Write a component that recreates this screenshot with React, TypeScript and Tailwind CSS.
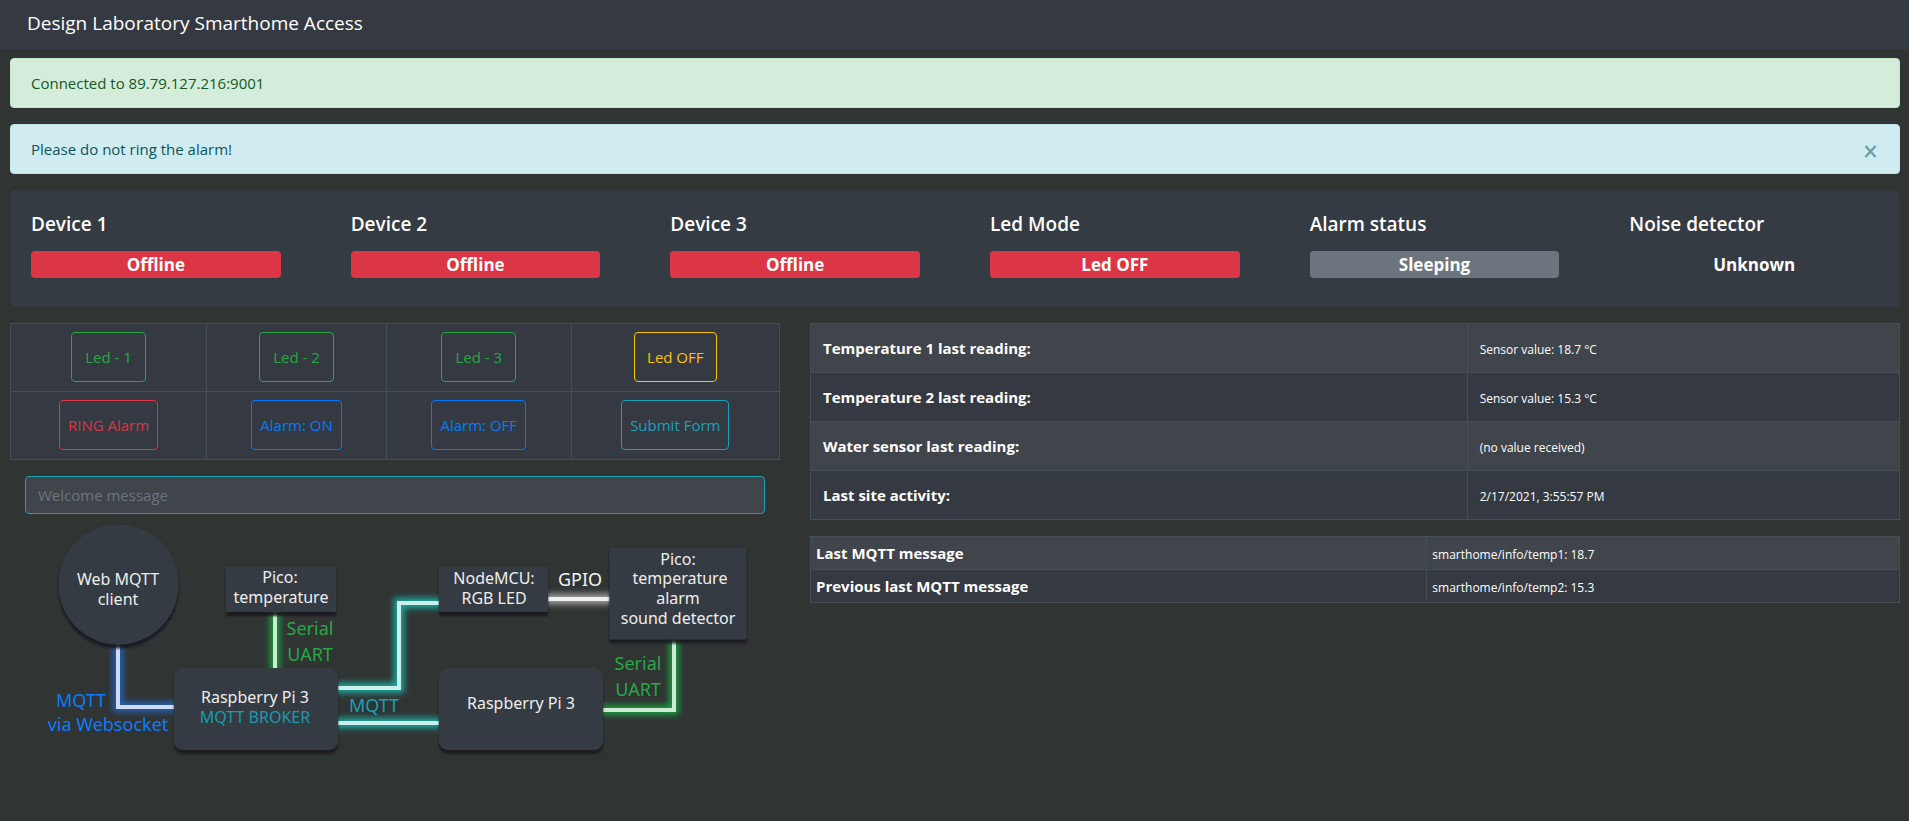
import { useState } from "react";

const devices = [
  { name: "Device 1", status: "Offline", tone: "bg-[#dc3545]" },
  { name: "Device 2", status: "Offline", tone: "bg-[#dc3545]" },
  { name: "Device 3", status: "Offline", tone: "bg-[#dc3545]" },
  { name: "Led Mode", status: "Led OFF", tone: "bg-[#dc3545]" },
  { name: "Alarm status", status: "Sleeping", tone: "bg-[#6c757d]" },
  { name: "Noise detector", status: "Unknown", tone: "" },
];

const green = "border-[#28a745] text-[#28a745] px-[13px]";
const blue = "border-[#007bff] text-[#007bff] px-2";
const controls = [
  [
    { label: "Led - 1", style: green },
    { label: "Led - 2", style: green },
    { label: "Led - 3", style: green },
    { label: "Led OFF", style: "border-[#ffc107] text-[#ffc107] px-3" },
  ],
  [
    { label: "RING Alarm", style: "border-[#dc3545] text-[#dc3545] px-2" },
    { label: "Alarm: ON", style: blue },
    { label: "Alarm: OFF", style: blue },
    { label: "Submit Form", style: "border-[#17a2b8] text-[#17a2b8] px-2" },
  ],
];

const readings = [
  ["Temperature 1 last reading:", "Sensor value: 18.7 °C"],
  ["Temperature 2 last reading:", "Sensor value: 15.3 °C"],
  ["Water sensor last reading:", "(no value received)"],
  ["Last site activity:", "2/17/2021, 3:55:57 PM"],
];

const messages = [
  ["Last MQTT message", "smarthome/info/temp1: 18.7"],
  ["Previous last MQTT message", "smarthome/info/temp2: 15.3"],
];

function Wire({ d, glow, core }: { d: string; glow: string; core: string }) {
  return (
    <g fill="none">
      <path d={d} stroke={glow} strokeWidth="10" filter="url(#glow)" />
      <path d={d} stroke={core} strokeWidth="4" />
    </g>
  );
}

function Topology() {
  return (
    <svg
      viewBox="10 514 770 250"
      className="block w-full"
      role="img"
      aria-label="Network topology"
      textAnchor="middle"
    >
      <defs>
        <filter id="glow" filterUnits="userSpaceOnUse" x="10" y="515" width="770" height="250">
          <feGaussianBlur stdDeviation="3" />
        </filter>
        <filter id="shade" filterUnits="userSpaceOnUse" x="10" y="515" width="770" height="250">
          <feDropShadow dx="0" dy="4" stdDeviation="1" floodColor="#17191b" floodOpacity="0.9" />
        </filter>
      </defs>
      <Wire d="M118 640V707H180" glow="#2460b8" core="#cfdcf4" />
      <Wire d="M275 606V672" glow="#1f9a3c" core="#cdecd2" />
      <Wire d="M334 688H399V603H442" glow="#1daaa0" core="#c9f0ec" />
      <Wire d="M334 723H442" glow="#1daaa0" core="#c9f0ec" />
      <Wire d="M544 599H614" glow="#a4a5a5" core="#f0f0f0" />
      <Wire d="M674 634V710H598" glow="#1f9a3c" core="#cdecd2" />
      <g fill="#343b43" filter="url(#shade)">
        <circle cx="118.5" cy="584.5" r="60" />
        <rect x="226" y="567" width="110" height="45" />
        <rect x="439" y="567" width="109" height="45" />
        <rect x="609.5" y="548" width="137" height="91.5" />
        <rect x="174" y="668" width="164" height="82" rx="9" />
        <rect x="439" y="668" width="164" height="82" rx="9" />
      </g>
      <g className="font-['Noto_Sans',sans-serif] text-[16px]" fill="#eeeeee">
        <text x="118" y="585">Web MQTT</text>
        <text x="118" y="605">client</text>
        <text x="280" y="583">Pico:</text>
        <text x="281" y="603">temperature</text>
        <text x="494" y="584">NodeMCU:</text>
        <text x="494" y="604">RGB LED</text>
        <text x="678" y="565">Pico:</text>
        <text x="680" y="584">temperature</text>
        <text x="678" y="604">alarm</text>
        <text x="678" y="624">sound detector</text>
        <text x="255" y="703">Raspberry Pi 3</text>
        <text x="255" y="723" fill="#1b9aae">MQTT BROKER</text>
        <text x="521" y="709">Raspberry Pi 3</text>
      </g>
      <g className="font-['Noto_Sans',sans-serif] text-[18px]">
        <text x="81" y="707" fill="#0a7cff">MQTT</text>
        <text x="108" y="731" fill="#0a7cff">via Websocket</text>
        <text x="310" y="635" fill="#28a745">Serial</text>
        <text x="310" y="661" fill="#28a745">UART</text>
        <text x="374" y="712" fill="#1b9fb4">MQTT</text>
        <text x="580" y="586" fill="#f4f4f4">GPIO</text>
        <text x="638" y="670" fill="#28a745">Serial</text>
        <text x="638" y="696" fill="#28a745">UART</text>
      </g>
    </svg>
  );
}

export default function App() {
  const [noticeOpen, setNoticeOpen] = useState(true);
  return (
    <div className="min-h-screen bg-[#303433] font-['Open_Sans','Noto_Sans',sans-serif] text-[15px] leading-6 text-white">
      <header className="bg-[#353941] px-[27px] pt-2 pb-3">
        <h1 className="text-[19px] leading-[30px]">Design Laboratory Smarthome Access</h1>
      </header>
      <main className="pt-2 pr-[9px] pl-[10px]">
        <div className="mb-4 rounded border border-[#c3e6cb] bg-[#d4edda] px-5 py-3 text-[#155724]">
          Connected to 89.79.127.216:9001
        </div>
        {noticeOpen && (
          <div className="mb-4 flex items-center justify-between rounded border border-[#bee5eb] bg-[#d1ecf1] py-3 pr-[18px] pl-5 text-[#0c5460]">
            Please do not ring the alarm!
            <button type="button" aria-label="Close" onClick={() => setNoticeOpen(false)} className="px-1 text-[#0c5460]/50">
              <svg width="13" height="13" viewBox="0 0 13 13" fill="none" stroke="currentColor" strokeWidth="2.4" className="mt-1">
                <path d="M1.5 1l10 11M11.5 1l-10 11" />
              </svg>
            </button>
          </div>
        )}
        <section className="mb-4 grid grid-cols-6 gap-[70px] rounded border border-[#31373b] bg-[#343b43] px-5 pt-5 pb-7">
          {devices.map((device) => (
            <div key={device.name}>
              <h2 className="mb-[14px] text-[19px] font-semibold leading-[26px]">{device.name}</h2>
              <div className={`rounded text-center text-[17px] font-bold leading-[27px] ${device.tone}`}>{device.status}</div>
            </div>
          ))}
        </section>
        <div className="grid grid-cols-[770fr_1090fr] items-start gap-[30px]">
          <div>
            <table className="w-full table-fixed border-collapse bg-[#353941]">
              <colgroup>
                <col className="w-[25.5%]" />
                <col className="w-[23.4%]" />
                <col className="w-[24%]" />
                <col />
              </colgroup>
              <tbody>
                {controls.map((row, index) => (
                  <tr key={index}>
                    {row.map((control) => (
                      <td key={control.label} className="border border-[#454d55] pt-2 pb-[9px] text-center">
                        <button type="button" className={`block mx-auto h-[50px] rounded border ${control.style}`}>
                          {control.label}
                        </button>
                      </td>
                    ))}
                  </tr>
                ))}
              </tbody>
            </table>
            <div className="px-[15px] pt-4">
              <input
                type="text"
                aria-label="Welcome message"
                placeholder="Welcome message"
                className="block h-[38px] w-full rounded border border-[#17a2b8] bg-[#40444b] px-3 placeholder:text-[#6c757d]"
              />
            </div>
            <Topology />
          </div>
          <div>
            <table className="mb-4 w-full border-collapse bg-[#353941]">
              <tbody>
                {readings.map(([label, value]) => (
                  <tr key={label} className="odd:bg-[#40444b]">
                    <th scope="row" className="w-[60.3%] border border-[#454d55] p-3 text-left align-baseline font-bold">{label}</th>
                    <td className="border border-[#454d55] p-3 align-baseline text-[12px] leading-5">{value}</td>
                  </tr>
                ))}
              </tbody>
            </table>
            <table className="w-full border-collapse bg-[#353941]">
              <tbody>
                {messages.map(([label, value]) => (
                  <tr key={label} className="odd:bg-[#40444b]">
                    <th scope="row" className="w-[56.6%] border border-[#454d55] px-[5px] py-1 text-left align-baseline font-bold">{label}</th>
                    <td className="border border-[#454d55] px-[5px] py-1 align-baseline text-[12px] leading-5">{value}</td>
                  </tr>
                ))}
              </tbody>
            </table>
          </div>
        </div>
      </main>
    </div>
  );
}
